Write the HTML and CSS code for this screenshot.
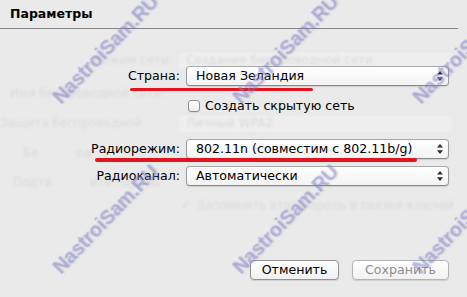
FILE: index.html
```html
<!DOCTYPE html>
<html lang="ru">
<head>
<meta charset="utf-8">
<title>Параметры</title>
<link rel="stylesheet" href="styles.css">
</head>
<body>
<div class="sheet">
  <div class="ghost" aria-hidden="true">
    <div class="g-tabs"></div>
    <div class="g-tab-dark"></div>
    <span class="g-text" style="left:84px;top:6px">анц.</span>
    <span class="g-text" style="left:138px;top:6px">Интернет</span>
    <span class="g-text g-light" style="left:222px;top:6px">Беспроводн.</span>
    <span class="g-text" style="left:317px;top:6px">Сеть</span>
    <span class="g-text" style="left:371px;top:6px">Диски</span>
    <span class="g-text" style="left:94px;top:52px">Режим сети:</span>
    <div class="g-box" style="left:177px;top:51px;width:275px"></div>
    <span class="g-text" style="left:186px;top:52px">Создание беспроводной сети</span>
    <span class="g-text" style="left:10px;top:85px">Имя беспроводной сети:</span>
    <span class="g-text" style="left:0;top:115px">Защита беспроводной</span>
    <div class="g-box" style="left:177px;top:114px;width:275px"></div>
    <span class="g-text" style="left:186px;top:115px">Личный WPA2</span>
    <span class="g-text" style="left:23px;top:145px">Бе</span>
    <span class="g-text" style="left:76px;top:145px">од</span>
    <span class="g-text" style="left:13px;top:174px">Подтв</span>
    <span class="g-text" style="left:90px;top:174px">ите пароль</span>
    <span class="g-text" style="left:181px;top:197px">✓</span>
    <span class="g-text" style="left:197px;top:197px">Запомнить этот пароль в связке ключей</span>
  </div>

  <header class="title">Параметры</header>

  <div class="form">
    <div class="row row-country">
      <span class="lbl">Страна:</span>
      <div class="popup"><span class="val">Новая Зеландия</span><svg class="arrows" width="6" height="10" viewBox="0 0 6 10"><path d="M3 0L6 3.6H0Z M0 6.2H6L3 10Z" fill="#2b2b2b"/></svg></div>
    </div>
    <div class="row row-check">
      <span class="lbl"></span>
      <label class="check"><span class="box"></span>Создать скрытую сеть</label>
    </div>
    <div class="row row-mode">
      <span class="lbl">Радиорежим:</span>
      <div class="popup"><span class="val">802.11n (совместим с 802.11b/g)</span><svg class="arrows" width="6" height="10" viewBox="0 0 6 10"><path d="M3 0L6 3.6H0Z M0 6.2H6L3 10Z" fill="#2b2b2b"/></svg></div>
    </div>
    <div class="row row-channel">
      <span class="lbl">Радиоканал:</span>
      <div class="popup"><span class="val">Автоматически</span><svg class="arrows" width="6" height="10" viewBox="0 0 6 10"><path d="M3 0L6 3.6H0Z M0 6.2H6L3 10Z" fill="#2b2b2b"/></svg></div>
    </div>
  </div>

  <div class="buttons">
    <button class="btn btn-cancel">Отменить</button>
    <button class="btn btn-save">Сохранить</button>
  </div>

  <div class="redline red-1"></div>
  <div class="redline red-2"></div>

  <span class="wm" style="left:63px;top:88px">NastroiSam.RU</span>
  <span class="wm" style="left:243px;top:88px">NastroiSam.RU</span>
  <span class="wm" style="left:423px;top:88px">NastroiSam.RU</span>
  <span class="wm" style="left:63px;top:258px">NastroiSam.RU</span>
  <span class="wm" style="left:243px;top:258px">NastroiSam.RU</span>
  <span class="wm" style="left:423px;top:258px">NastroiSam.RU</span>
</div>
</body>
</html>
```
FILE: styles.css
```css
html, body {
  margin: 0;
  padding: 0;
  background: #eaeaea;
}
body {
  width: 467px;
  height: 297px;
  overflow: hidden;
  font-family: "DejaVu Sans", "Liberation Sans", sans-serif;
  font-size: 12.6px;
  color: #000;
}
.sheet {
  position: relative;
  width: 467px;
  height: 297px;
  overflow: hidden;
}

/* faded background dialog */
.ghost {
  position: absolute;
  inset: 0;
  filter: blur(0.8px);
}
.g-text {
  position: absolute;
  color: #dadada;
  font-size: 12px;
  line-height: 16px;
  white-space: nowrap;
}
.g-light { color: #d6d6d6; }
.g-box {
  position: absolute;
  height: 18px;
  background: #eeeeee;
  border: 1px solid #e2e2e2;
  border-radius: 4px;
}
.g-tabs {
  position: absolute;
  left: 72px;
  top: 3px;
  width: 352px;
  height: 20px;
  background: #efefef;
  border: 1px solid #e4e4e4;
  border-radius: 4px;
}
.g-tab-dark {
  position: absolute;
  left: 212px;
  top: 4px;
  width: 96px;
  height: 20px;
  background: #e0e0e0;
}

.title {
  position: relative;
  width: 458px;
  height: 29px;
  box-sizing: border-box;
  padding: 6px 0 0 10px;
  border-bottom: 1px solid #848484;
  font-weight: bold;
  font-size: 12.5px;
  line-height: 16px;
  background: #eaeaea;
}

.form {
  position: relative;
  margin-top: 37px;
  display: flex;
  flex-direction: column;
}
.row {
  display: grid;
  grid-template-columns: 180px 263px;
  column-gap: 6px;
  align-items: center;
  height: 20px;
}
.row-check { margin-top: 10px; }
.row-mode { margin-top: 23px; }
.row-channel { margin-top: 7px; }
.lbl {
  text-align: right;
  line-height: 20px;
  white-space: nowrap;
}
.popup {
  box-sizing: border-box;
  height: 20px;
  border: 1px solid #9b9b9b;
  border-top-color: #a8a8a8;
  border-bottom-color: #8a8a8a;
  border-radius: 4px;
  background: linear-gradient(#ffffff, #f3f3f3);
  box-shadow: 0 1px 1px rgba(0, 0, 0, 0.12);
  display: flex;
  align-items: center;
  padding-left: 9px;
  padding-right: 5px;
  line-height: 18px;
}
.val {
  flex: 1;
  white-space: nowrap;
  overflow: hidden;
}
.arrows {
  flex: none;
  display: block;
}
.check {
  display: flex;
  align-items: center;
  gap: 5px;
  margin-left: 2px;
  line-height: 20px;
  white-space: nowrap;
}
.box {
  width: 12px;
  height: 12px;
  box-sizing: border-box;
  border: 1px solid #8e8e8e;
  border-radius: 3px;
  background: linear-gradient(#ffffff, #ececec);
  box-shadow: 0 1px 0 rgba(0, 0, 0, 0.06);
}

.buttons {
  position: relative;
  width: 449px;
  margin-top: 74px;
  display: flex;
  justify-content: flex-end;
  gap: 13px;
}
.btn {
  height: 20px;
  box-sizing: border-box;
  padding: 0;
  font-family: inherit;
  font-size: 12.6px;
  line-height: 18px;
  border-radius: 4px;
  border: 1px solid #929292;
  background: linear-gradient(#ffffff, #f1f1f1);
  box-shadow: 0 1px 1px rgba(0, 0, 0, 0.12);
  color: #000;
}
.btn-cancel { width: 89px; }
.btn-save {
  width: 97px;
  color: #8e8e8e;
  border-color: #b4b4b4;
}

/* annotation marks */
.redline {
  position: absolute;
  height: 3px;
  background: #e4141f;
  border-radius: 2px;
}
.red-1 { left: 130px; top: 88px; width: 183px; }
.red-2 { left: 95px; top: 158px; width: 322px; height: 3.5px; }

/* watermark */
.wm {
  position: absolute;
  font-family: "Liberation Sans", Arial, sans-serif;
  font-weight: bold;
  font-size: 19.5px;
  line-height: 19px;
  white-space: nowrap;
  color: rgba(135, 135, 210, 0.45);
  text-shadow: 1px 1px 2px rgba(110, 110, 160, 0.3);
  filter: blur(0.4px);
  transform-origin: 0 100%;
  transform: rotate(-46deg);
}
```
